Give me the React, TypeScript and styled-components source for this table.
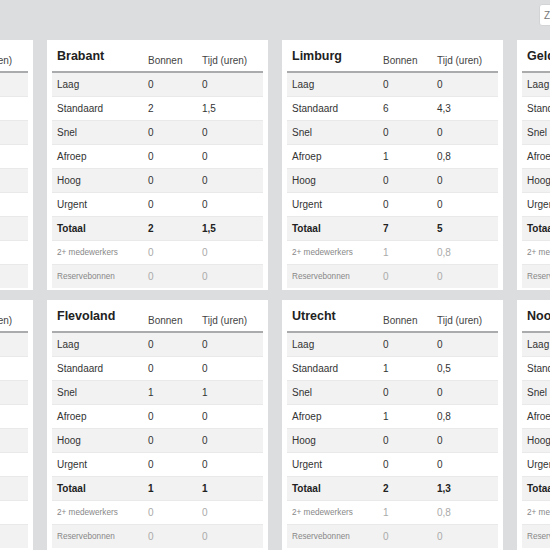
import React from 'react';
import styled, { createGlobalStyle, css } from 'styled-components';

type RowKind = 'normal' | 'total' | 'muted';

interface Row {
    label: string;
    bonnen: string;
    tijd: string;
    kind: RowKind;
}

interface Region {
    name: string;
    values: [string, string][];
}

const labels: [string, RowKind][] = [
    ['Laag', 'normal'],
    ['Standaard', 'normal'],
    ['Snel', 'normal'],
    ['Afroep', 'normal'],
    ['Hoog', 'normal'],
    ['Urgent', 'normal'],
    ['Totaal', 'total'],
    ['2+ medewerkers', 'muted'],
    ['Reservebonnen', 'muted'],
];

const zeros: [string, string][] = labels.map(() => ['0', '0']);

const regions: Region[] = [
    { name: 'Zeeland', values: zeros },
    {
        name: 'Brabant',
        values: [['0', '0'], ['2', '1,5'], ['0', '0'], ['0', '0'], ['0', '0'], ['0', '0'], ['2', '1,5'], ['0', '0'], ['0', '0']],
    },
    {
        name: 'Limburg',
        values: [['0', '0'], ['6', '4,3'], ['0', '0'], ['1', '0,8'], ['0', '0'], ['0', '0'], ['7', '5'], ['1', '0,8'], ['0', '0']],
    },
    { name: 'Gelderland', values: zeros },
    { name: 'Zuid-Holland', values: zeros },
    {
        name: 'Flevoland',
        values: [['0', '0'], ['0', '0'], ['1', '1'], ['0', '0'], ['0', '0'], ['0', '0'], ['1', '1'], ['0', '0'], ['0', '0']],
    },
    {
        name: 'Utrecht',
        values: [['0', '0'], ['1', '0,5'], ['0', '0'], ['1', '0,8'], ['0', '0'], ['0', '0'], ['2', '1,3'], ['1', '0,8'], ['0', '0']],
    },
    { name: 'Noord-Holland', values: zeros },
];

const GlobalStyle = createGlobalStyle`
    html, body {
        margin: 0;
        padding: 0;
        background-color: #dcdddf;
        overflow: hidden;
    }
    body {
        font-family: "Liberation Sans", Arial, sans-serif;
        color: #333;
    }
`;

const Toolbar = styled.div`
    display: flex;
    justify-content: flex-end;
    height: 40px;
    padding-top: 4px;
    box-sizing: border-box;
    margin-right: -41px;
`;

const SearchButton = styled.button`
    width: 52px;
    height: 22px;
    padding: 0 0 0 4px;
    text-align: left;
    border: 1px solid #d3d4d6;
    border-radius: 3px;
    background: #fff;
    color: #777;
    font-family: inherit;
    font-size: 10px;
`;

const Grid = styled.div`
    display: grid;
    grid-template-columns: repeat(4, 221px);
    column-gap: 14px;
    row-gap: 10px;
    margin-left: -188px;
`;

const Card = styled.div`
    background-color: #fff;
    padding: 5px 5px 2px;
`;

const Table = styled.table`
    width: 100%;
    border-collapse: collapse;
    table-layout: fixed;
`;

const HeadCell = styled.th<{ $title?: boolean }>`
    height: 22px;
    padding: 0 5px 4px;
    text-align: left;
    vertical-align: bottom;
    border-bottom: 2px solid #aaabac;
    font-weight: normal;
    font-size: 10px;
    line-height: 12px;
    color: #444;
    white-space: nowrap;
    overflow: hidden;

    ${({ $title }) =>
        $title &&
        css`
            padding-bottom: 8px;
            height: 18px;
            font-size: 12.5px;
            line-height: 14px;
            font-weight: bold;
            color: #222;
        `}
`;

const BodyRow = styled.tr`
    &:nth-child(odd) {
        background-color: #f2f2f2;
    }
`;

const Cell = styled.td<{ $kind: RowKind; $value?: boolean }>`
    height: 23px;
    padding: 0 5px;
    border-top: 1px solid #e9e9e9;
    font-size: 10px;
    color: #333;
    white-space: nowrap;
    overflow: hidden;

    ${({ $kind }) =>
        $kind === 'total' &&
        css`
            font-weight: bold;
            color: #222;
        `}

    ${({ $kind, $value }) =>
        $kind === 'muted' &&
        css`
            font-size: ${$value ? '10px' : '8.2px'};
            color: ${$value ? '#aaa' : '#888'};
        `}
`;

function RegionCard({ name, values }: Region) {
    const rows: Row[] = labels.map(([label, kind], i) => ({
        label,
        kind,
        bonnen: values[i][0],
        tijd: values[i][1],
    }));
    return (
        <Card>
            <Table>
                <colgroup>
                    <col style={{ width: 91 }} />
                    <col style={{ width: 54 }} />
                    <col />
                </colgroup>
                <thead>
                    <tr>
                        <HeadCell $title>{name}</HeadCell>
                        <HeadCell>Bonnen</HeadCell>
                        <HeadCell>Tijd (uren)</HeadCell>
                    </tr>
                </thead>
                <tbody>
                    {rows.map((row) => (
                        <BodyRow key={row.label}>
                            <Cell $kind={row.kind}>{row.label}</Cell>
                            <Cell $kind={row.kind} $value>
                                {row.bonnen}
                            </Cell>
                            <Cell $kind={row.kind} $value>
                                {row.tijd}
                            </Cell>
                        </BodyRow>
                    ))}
                </tbody>
            </Table>
        </Card>
    );
}

export default function App() {
    return (
        <>
            <GlobalStyle />
            <Toolbar>
                <SearchButton>Zoeken</SearchButton>
            </Toolbar>
            <Grid>
                {regions.map((region) => (
                    <RegionCard key={region.name} {...region} />
                ))}
            </Grid>
        </>
    );
}
